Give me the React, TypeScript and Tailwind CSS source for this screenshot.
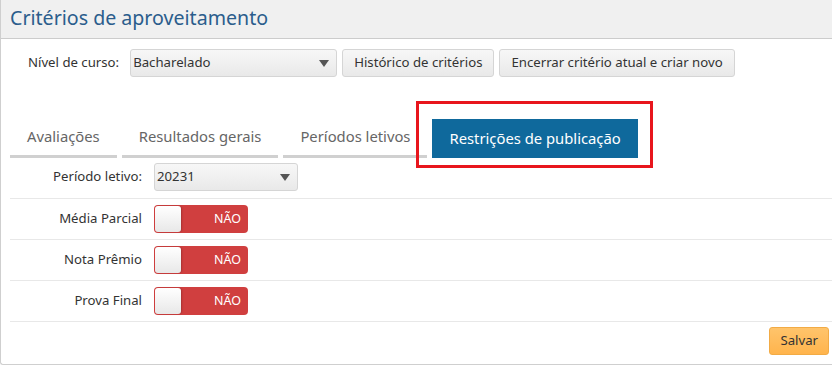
import React from "react";

const font = { fontFamily: '"Segoe UI", "Noto Sans", "Open Sans", sans-serif' };

function Caret() {
  return (
    <svg width="10" height="7" viewBox="0 0 10 7" className="shrink-0">
      <path d="M0 0 L10 0 L5 7 Z" fill="#555" />
    </svg>
  );
}

function Select({ value, width }: { value: string; width: string }) {
  return (
    <div
      className={`flex items-center justify-between h-[28px] rounded-[3px] border border-[#d5d5d5] bg-gradient-to-b from-[#f7f7f7] to-[#e9e9e9] pl-[2px] pr-[7px] text-[13.2px] text-[#333] ${width}`}
    >
      <span>{value}</span>
      <Caret />
    </div>
  );
}

function Btn({ children }: { children: React.ReactNode }) {
  return (
    <div className="flex items-center h-[28px] rounded-[3px] border border-[#d5d5d5] bg-gradient-to-b from-[#f7f7f7] to-[#e9e9e9] px-[11px] text-[13.2px] text-[#333]">
      {children}
    </div>
  );
}

function Toggle() {
  return (
    <div className="relative flex items-center justify-end h-[28px] w-[94px] rounded-[4px] bg-[#d03f3f] pr-[7px]">
      <div className="absolute left-[1px] top-[1px] bottom-[1px] w-[26px] rounded-[3px] bg-gradient-to-b from-[#ffffff] to-[#e8e8e8] shadow-[1px_0_2px_rgba(0,0,0,0.2)]" />
      <span className="text-[12.5px] text-white">NÃO</span>
    </div>
  );
}

function Row({ label, children, first }: { label: string; children: React.ReactNode; first?: boolean }) {
  return (
    <div className={`flex items-center border-b border-[#e8e8e8] ${first ? "pt-[4px] pb-[7px]" : "py-[6px]"}`}>
      <div className="w-[132px] text-right text-[13.2px] text-[#333]">{label}</div>
      <div className="ml-[12px]">{children}</div>
    </div>
  );
}

export default function App() {
  const tabs = ["Avaliações", "Resultados gerais", "Períodos letivos"];
  return (
    <div style={font} className="w-[832px] h-[366px] bg-white">
      <div className="h-[365px] border-l border-b border-[#cfcfcf] rounded-bl-[3px] flex flex-col">
        <div className="h-[39px] bg-[#f0f0f0] border-b border-[#cccccc] flex items-center pl-[9px]">
          <span className="text-[19.6px] text-[#2b5d8c] leading-none -mt-[2px]">Critérios de aproveitamento</span>
        </div>
        <div className="flex items-center pt-[10px] pl-[27px] gap-[5px]">
          <span className="text-[13.2px] text-[#333] mr-[6px]">Nível de curso:</span>
          <Select value="Bacharelado" width="w-[207px]" />
          <Btn>Histórico de critérios</Btn>
          <Btn>Encerrar critério atual e criar novo</Btn>
        </div>
        <div className="flex items-end pl-[9px] mt-[41px] gap-[5px]">
          {tabs.map((t) => (
            <div key={t} className="flex flex-col">
              <div className="h-[37px] flex items-center px-[17px] text-[14.8px] text-[#666]">{t}</div>
              <div className="h-[3px] bg-[#d0d0d0]" />
            </div>
          ))}
          <div className="relative">
            <div className="h-[39px] flex items-center px-[17px] bg-[#0f699c] text-[14.8px] text-white">
              Restrições de publicação
            </div>
            <div className="absolute -left-[16px] -top-[18px] w-[237px] h-[67px] border-[3px] border-[#e8161d]" />
          </div>
        </div>
        <div className="ml-[9px] mt-[1px]">
          <Row label="Período letivo:" first>
            <Select value="20231" width="w-[144px]" />
          </Row>
          <Row label="Média Parcial">
            <Toggle />
          </Row>
          <Row label="Nota Prêmio">
            <Toggle />
          </Row>
          <Row label="Prova Final">
            <Toggle />
          </Row>
          <div className="flex justify-end pt-[5px] pr-[3px]">
            <div className="flex items-center h-[28px] px-[10px] rounded-[3px] border border-[#f2ab45] bg-gradient-to-b from-[#ffc46b] to-[#ffb44c] text-[13.2px] text-[#333]">
              Salvar
            </div>
          </div>
        </div>
      </div>
    </div>
  );
}
